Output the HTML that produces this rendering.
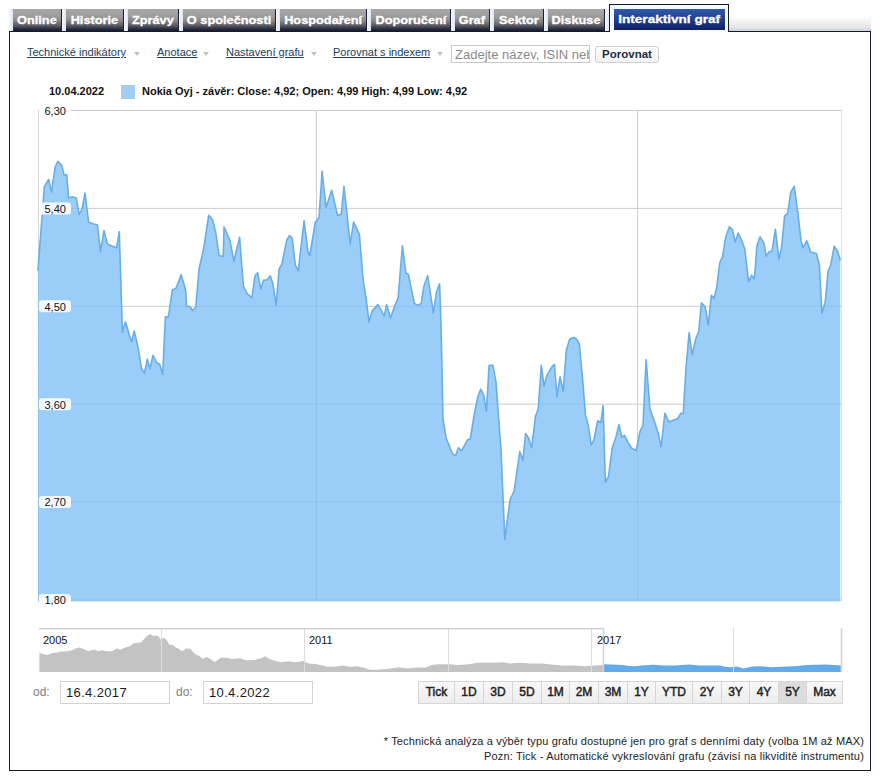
<!DOCTYPE html>
<html><head><meta charset="utf-8">
<style>
*{box-sizing:border-box}
html,body{margin:0;padding:0;background:#fff;width:880px;height:781px;overflow:hidden;font-family:"Liberation Sans",sans-serif}
.abs{position:absolute}
.tab{position:absolute;top:9px;height:23px;}
.tab .sh{position:absolute;left:0;top:0;width:4px;height:22px;background:linear-gradient(to right,#f4f7fb,#dfe6f0)}
.tab .bd{position:absolute;left:4px;top:0;right:0;height:22px;background:linear-gradient(to bottom,#a8a8a8 0%,#9c9c9c 35%,#868688 55%,#5a5a60 75%,#2c2f42 90%,#131a36 100%);border-right:1px solid #1c2030;color:#fff;font-weight:bold;font-size:11.5px;line-height:22px;text-align:center;white-space:nowrap}
.tab .bd span{display:inline-block;transform:scaleX(1.11);-webkit-text-stroke:0.3px #fff}
#box{position:absolute;left:9px;top:31px;width:862px;height:740px;border:1px solid #151c2c}
.lnk{position:absolute;top:46px;font-size:11px;color:#203c5c;text-decoration:underline;white-space:nowrap;line-height:13px}
.rb{position:absolute;top:681px;height:23px;border:1px solid #d6d6d6;border-right:none;font-size:12px;color:#222;line-height:21px;text-align:center;white-space:nowrap;background:linear-gradient(#f7f7f7,#eeeeee);-webkit-text-stroke:0.45px #222}
.rb.sel{background:#dcdcdc}
.tri{position:absolute;top:52px;width:0;height:0;border-left:3px solid transparent;border-right:3px solid transparent;border-top:4px solid #c2c2c2}
</style></head><body>
<!-- tabs -->
<div class="tab" style="left:9px;width:53px"><div class="sh"></div><div class="bd"><span>Online</span></div></div>
<div class="tab" style="left:62px;width:62px"><div class="sh"></div><div class="bd"><span>Historie</span></div></div>
<div class="tab" style="left:124px;width:55px"><div class="sh"></div><div class="bd"><span>Zprávy</span></div></div>
<div class="tab" style="left:179px;width:97px"><div class="sh"></div><div class="bd"><span>O společnosti</span></div></div>
<div class="tab" style="left:276px;width:91px"><div class="sh"></div><div class="bd"><span>Hospodaření</span></div></div>
<div class="tab" style="left:367px;width:84px"><div class="sh"></div><div class="bd"><span>Doporučení</span></div></div>
<div class="tab" style="left:451px;width:39px"><div class="sh"></div><div class="bd"><span>Graf</span></div></div>
<div class="tab" style="left:490px;width:54px"><div class="sh"></div><div class="bd"><span>Sektor</span></div></div>
<div class="tab" style="left:544px;width:61px"><div class="sh"></div><div class="bd"><span>Diskuse</span></div></div>
<div class="tab" style="left:605px;width:4px"><div class="sh"></div></div>

<div id="box"></div>
<!-- right gradient strip -->
<div class="abs" style="left:729px;top:17px;width:142px;height:14px;background:linear-gradient(to bottom,#fdfdfd,#e6e4e4 75%,#c9d2e2)"></div>
<!-- active tab -->
<div class="abs" style="left:609px;top:4px;width:120px;height:28px;border:1px solid #151c2c;border-bottom:none;background:linear-gradient(#f3f7fc,#fafcfe)"></div>
<div class="abs" style="left:614px;top:9px;width:111px;height:21px;background:linear-gradient(to bottom,#2f5aa8,#1d3c8a 55%,#0f1f66);color:#fff;font-weight:bold;font-size:11.5px;line-height:21px;text-align:center;white-space:nowrap"><span style="display:inline-block;transform:scaleX(1.18);-webkit-text-stroke:0.3px #fff">Interaktivní graf</span></div>

<!-- toolbar -->
<span class="lnk" style="left:27px">Technické indikátory</span><span class="tri" style="left:134px"></span>
<span class="lnk" style="left:157px">Anotace</span><span class="tri" style="left:203px"></span>
<span class="lnk" style="left:226px">Nastavení grafu</span><span class="tri" style="left:311px"></span>
<span class="lnk" style="left:333px">Porovnat s indexem</span><span class="tri" style="left:437px"></span>
<div class="abs" style="left:451px;top:45px;width:139px;height:18px;border:1px solid #c8c8c8;font-size:13px;color:#8a8a8a;line-height:18px;padding-left:3px;white-space:nowrap;overflow:hidden">Zadejte název, ISIN nebo</div>
<div class="abs" style="left:595px;top:46px;width:64px;height:17px;border:1px solid #cfcfcf;border-radius:3px;background:linear-gradient(#fff,#f2f2f2);font-size:11.5px;font-weight:bold;color:#1b2c48;line-height:15px;text-align:center">Porovnat</div>

<!-- legend -->
<div class="abs" style="left:49px;top:84px;font-size:11px;font-weight:bold;color:#111;line-height:14px">10.04.2022</div>
<div class="abs" style="left:121px;top:85px;width:14px;height:14px;background:#9fcff5"></div>
<div class="abs" style="left:142px;top:84px;font-size:11px;font-weight:bold;color:#111;line-height:14px;white-space:nowrap">Nokia Oyj - závěr: Close: 4,92; Open: 4,99 High: 4,99 Low: 4,92</div>

<!-- chart svg -->
<svg class="abs" style="left:0;top:0" width="880" height="781" id="chart">
<g stroke="#cdcdcd" stroke-width="1" fill="none">
<path d="M316.5,110.5 V600.5 M637.5,110.5 V600.5"/>
<path d="M38.5,110 V601" stroke="#d6d6d6"/><path d="M841.5,110 V601" stroke="#e2e2e2"/>
<path d="M38,110.5 H842 M38,208.4 H842 M38,306.3 H842 M38,404.2 H842 M38,502.1 H842 M38,600.0 H842"/>
</g>
<path d="M37.9,270.8 L44.4,186.4 L48.7,179.5 L51.4,192.0 L55.2,167.0 L57.9,161.4 L61.7,165.3 L64.0,174.9 L66.7,174.9 L68.6,197.9 L72.5,196.7 L76.3,198.0 L79.0,214.4 L82.0,209.4 L85.0,193.0 L88.6,222.0 L93.6,224.0 L97.4,224.8 L100.5,251.6 L104.0,230.5 L107.4,244.0 L112.0,245.9 L116.6,247.8 L119.3,231.7 L122.4,332.2 L125.4,321.9 L131.5,342.0 L134.2,331.0 L137.7,345.7 L141.6,368.7 L144.3,373.3 L147.3,359.1 L150.0,368.7 L153.0,355.3 L156.9,363.0 L159.6,364.0 L162.7,374.5 L165.4,316.9 L168.4,316.9 L172.3,290.0 L176.1,288.1 L181.1,274.7 L185.7,290.0 L186.5,306.0 L190.2,307.0 L192.6,310.5 L195.8,307.0 L199.1,268.9 L203.8,247.8 L208.7,215.2 L212.6,219.8 L215.7,232.4 L219.1,255.5 L223.3,256.6 L224.0,226.7 L229.9,240.1 L233.8,261.2 L239.6,237.4 L243.4,286.2 L247.3,293.9 L251.9,297.7 L255.0,275.8 L257.6,272.7 L260.7,288.9 L263.4,280.4 L267.2,279.7 L270.3,275.8 L273.0,284.3 L276.1,305.4 L279.1,268.9 L281.8,264.3 L286.8,240.1 L289.5,235.5 L292.2,238.2 L295.3,265.0 L298.3,270.8 L304.1,220.9 L307.9,251.6 L309.8,255.5 L315.2,222.8 L319.1,217.1 L322.1,171.0 L326.0,207.5 L331.7,190.2 L337.5,215.2 L341.3,214.4 L344.0,186.4 L347.1,215.2 L350.2,244.0 L353.6,222.1 L359.4,234.4 L363.2,280.4 L366.3,299.6 L369.0,321.9 L372.0,311.1 L377.8,304.6 L381.6,311.1 L384.3,316.1 L386.6,304.6 L390.5,318.0 L394.3,307.3 L398.1,297.7 L402.4,245.9 L405.8,272.7 L408.5,274.7 L414.3,303.5 L418.1,305.4 L421.2,303.5 L423.9,286.2 L427.7,275.7 L430.8,296.0 L433.4,313.3 L436.5,292.2 L439.6,283.8 L441.1,326.8 L443.0,418.9 L446.1,438.1 L450.0,447.7 L452.6,454.2 L455.7,455.4 L458.4,447.7 L461.5,450.8 L465.3,443.9 L467.2,440.0 L470.3,438.9 L474.1,415.1 L477.6,397.8 L480.7,389.0 L483.7,395.1 L486.4,411.2 L489.1,365.2 L492.9,365.2 L496.0,382.4 L501.0,449.6 L504.8,539.8 L507.5,518.7 L510.2,499.5 L514.1,491.1 L519.8,451.5 L522.9,460.4 L525.6,433.5 L528.6,438.1 L531.7,447.7 L535.6,415.8 L538.2,409.3 L541.3,365.2 L544.0,386.3 L547.1,374.8 L551.7,367.1 L554.4,364.4 L557.0,396.6 L560.1,376.7 L563.2,391.3 L566.3,350.6 L569.7,339.1 L573.9,337.5 L576.6,339.1 L579.3,344.0 L582.4,376.7 L585.5,415.1 L588.1,424.7 L591.2,445.0 L593.9,440.0 L597.7,420.8 L600.8,422.7 L603.1,405.5 L605.4,482.2 L608.5,476.5 L612.3,447.7 L616.2,436.2 L618.9,424.7 L621.9,437.2 L624.6,435.3 L627.7,441.8 L631.5,448.0 L636.1,450.6 L640.0,431.4 L643.0,425.7 L646.1,359.7 L649.9,408.4 L654.5,421.8 L658.4,434.1 L661.1,446.8 L664.9,413.4 L668.8,421.8 L673.7,419.9 L677.6,418.8 L680.7,413.4 L683.3,413.4 L686.0,368.1 L689.1,332.8 L692.2,354.7 L695.6,339.3 L698.7,331.6 L701.4,302.8 L705.2,306.7 L708.3,325.1 L711.4,295.2 L714.0,298.2 L716.7,287.5 L719.8,262.5 L722.5,256.8 L725.6,237.6 L729.4,226.8 L732.5,229.9 L735.2,242.2 L738.2,233.0 L742.1,241.4 L744.8,249.1 L748.6,281.7 L751.7,275.2 L754.4,279.0 L757.0,245.3 L760.1,236.8 L764.0,243.3 L766.1,256.1 L769.2,251.6 L771.9,251.6 L775.4,229.4 L778.9,259.1 L781.5,247.9 L784.6,216.1 L787.7,213.0 L790.7,192.1 L794.2,186.4 L797.9,213.0 L801.0,240.7 L803.0,247.9 L806.7,240.7 L810.8,252.0 L814.3,253.0 L816.4,253.6 L819.4,265.3 L821.9,313.4 L825.2,302.2 L828.0,271.4 L830.7,265.3 L834.2,246.2 L837.5,251.0 L840.3,260.2 L840.3,601.5 L37.9,601.5 Z" fill="#78bef6" fill-opacity="0.75" stroke="none"/>
<path d="M37.9,270.8 L44.4,186.4 L48.7,179.5 L51.4,192.0 L55.2,167.0 L57.9,161.4 L61.7,165.3 L64.0,174.9 L66.7,174.9 L68.6,197.9 L72.5,196.7 L76.3,198.0 L79.0,214.4 L82.0,209.4 L85.0,193.0 L88.6,222.0 L93.6,224.0 L97.4,224.8 L100.5,251.6 L104.0,230.5 L107.4,244.0 L112.0,245.9 L116.6,247.8 L119.3,231.7 L122.4,332.2 L125.4,321.9 L131.5,342.0 L134.2,331.0 L137.7,345.7 L141.6,368.7 L144.3,373.3 L147.3,359.1 L150.0,368.7 L153.0,355.3 L156.9,363.0 L159.6,364.0 L162.7,374.5 L165.4,316.9 L168.4,316.9 L172.3,290.0 L176.1,288.1 L181.1,274.7 L185.7,290.0 L186.5,306.0 L190.2,307.0 L192.6,310.5 L195.8,307.0 L199.1,268.9 L203.8,247.8 L208.7,215.2 L212.6,219.8 L215.7,232.4 L219.1,255.5 L223.3,256.6 L224.0,226.7 L229.9,240.1 L233.8,261.2 L239.6,237.4 L243.4,286.2 L247.3,293.9 L251.9,297.7 L255.0,275.8 L257.6,272.7 L260.7,288.9 L263.4,280.4 L267.2,279.7 L270.3,275.8 L273.0,284.3 L276.1,305.4 L279.1,268.9 L281.8,264.3 L286.8,240.1 L289.5,235.5 L292.2,238.2 L295.3,265.0 L298.3,270.8 L304.1,220.9 L307.9,251.6 L309.8,255.5 L315.2,222.8 L319.1,217.1 L322.1,171.0 L326.0,207.5 L331.7,190.2 L337.5,215.2 L341.3,214.4 L344.0,186.4 L347.1,215.2 L350.2,244.0 L353.6,222.1 L359.4,234.4 L363.2,280.4 L366.3,299.6 L369.0,321.9 L372.0,311.1 L377.8,304.6 L381.6,311.1 L384.3,316.1 L386.6,304.6 L390.5,318.0 L394.3,307.3 L398.1,297.7 L402.4,245.9 L405.8,272.7 L408.5,274.7 L414.3,303.5 L418.1,305.4 L421.2,303.5 L423.9,286.2 L427.7,275.7 L430.8,296.0 L433.4,313.3 L436.5,292.2 L439.6,283.8 L441.1,326.8 L443.0,418.9 L446.1,438.1 L450.0,447.7 L452.6,454.2 L455.7,455.4 L458.4,447.7 L461.5,450.8 L465.3,443.9 L467.2,440.0 L470.3,438.9 L474.1,415.1 L477.6,397.8 L480.7,389.0 L483.7,395.1 L486.4,411.2 L489.1,365.2 L492.9,365.2 L496.0,382.4 L501.0,449.6 L504.8,539.8 L507.5,518.7 L510.2,499.5 L514.1,491.1 L519.8,451.5 L522.9,460.4 L525.6,433.5 L528.6,438.1 L531.7,447.7 L535.6,415.8 L538.2,409.3 L541.3,365.2 L544.0,386.3 L547.1,374.8 L551.7,367.1 L554.4,364.4 L557.0,396.6 L560.1,376.7 L563.2,391.3 L566.3,350.6 L569.7,339.1 L573.9,337.5 L576.6,339.1 L579.3,344.0 L582.4,376.7 L585.5,415.1 L588.1,424.7 L591.2,445.0 L593.9,440.0 L597.7,420.8 L600.8,422.7 L603.1,405.5 L605.4,482.2 L608.5,476.5 L612.3,447.7 L616.2,436.2 L618.9,424.7 L621.9,437.2 L624.6,435.3 L627.7,441.8 L631.5,448.0 L636.1,450.6 L640.0,431.4 L643.0,425.7 L646.1,359.7 L649.9,408.4 L654.5,421.8 L658.4,434.1 L661.1,446.8 L664.9,413.4 L668.8,421.8 L673.7,419.9 L677.6,418.8 L680.7,413.4 L683.3,413.4 L686.0,368.1 L689.1,332.8 L692.2,354.7 L695.6,339.3 L698.7,331.6 L701.4,302.8 L705.2,306.7 L708.3,325.1 L711.4,295.2 L714.0,298.2 L716.7,287.5 L719.8,262.5 L722.5,256.8 L725.6,237.6 L729.4,226.8 L732.5,229.9 L735.2,242.2 L738.2,233.0 L742.1,241.4 L744.8,249.1 L748.6,281.7 L751.7,275.2 L754.4,279.0 L757.0,245.3 L760.1,236.8 L764.0,243.3 L766.1,256.1 L769.2,251.6 L771.9,251.6 L775.4,229.4 L778.9,259.1 L781.5,247.9 L784.6,216.1 L787.7,213.0 L790.7,192.1 L794.2,186.4 L797.9,213.0 L801.0,240.7 L803.0,247.9 L806.7,240.7 L810.8,252.0 L814.3,253.0 L816.4,253.6 L819.4,265.3 L821.9,313.4 L825.2,302.2 L828.0,271.4 L830.7,265.3 L834.2,246.2 L837.5,251.0 L840.3,260.2" fill="none" stroke="#68aee6" stroke-width="1.6" stroke-linejoin="round"/>
<g font-family="Liberation Sans" font-size="11" fill="#111">
<rect x="39" y="104.5" width="32" height="12" rx="3" fill="#fff" fill-opacity="0.9"/><text x="44.5" y="114.8">6,30</text>
<rect x="39" y="202.4" width="32" height="12" rx="3" fill="#fff" fill-opacity="0.9"/><text x="44.5" y="212.7">5,40</text>
<rect x="39" y="300.3" width="32" height="12" rx="3" fill="#fff" fill-opacity="0.9"/><text x="44.5" y="310.6">4,50</text>
<rect x="39" y="398.2" width="32" height="12" rx="3" fill="#fff" fill-opacity="0.9"/><text x="44.5" y="408.5">3,60</text>
<rect x="39" y="496.1" width="32" height="12" rx="3" fill="#fff" fill-opacity="0.9"/><text x="44.5" y="506.4">2,70</text>
<rect x="39" y="594.0" width="32" height="12" rx="3" fill="#fff" fill-opacity="0.9"/><text x="44.5" y="604.3">1,80</text>
</g>
<path d="M39.4,652.4 L42.8,653.9 L47.4,655.0 L51.9,653.2 L56.5,652.4 L61.0,651.6 L67.8,651.3 L72.4,650.2 L75.2,648.5 L79.2,647.5 L83.7,649.0 L88.3,651.3 L94.0,649.6 L98.5,651.3 L101.9,650.2 L106.5,651.3 L112.1,651.3 L116.7,648.5 L120.1,649.8 L125.8,647.3 L130.0,646.2 L133.4,643.3 L141.4,642.2 L143.6,639.4 L147.0,636.0 L150.5,633.7 L152.7,636.0 L156.1,635.4 L158.4,636.0 L160.7,639.4 L163.0,637.7 L166.4,639.4 L169.2,644.5 L172.6,645.0 L175.5,647.3 L178.9,649.0 L182.3,651.3 L185.7,648.5 L190.2,648.8 L193.6,652.4 L197.0,655.3 L199.3,655.8 L202.7,658.7 L206.7,657.0 L210.7,659.3 L214.7,662.1 L220.9,657.8 L226.6,657.8 L232.0,659.1 L240.5,658.2 L245.7,660.3 L254.2,659.9 L261.0,658.2 L265.3,656.2 L269.5,659.1 L274.6,660.8 L281.4,662.2 L288.3,661.3 L295.1,662.2 L303.6,661.1 L308.7,663.4 L315.5,663.9 L322.4,665.6 L327.5,666.8 L336.0,666.4 L342.8,665.4 L349.6,666.8 L356.5,666.2 L363.3,667.6 L370.1,669.7 L376.9,669.7 L387.1,669.0 L399.1,667.3 L407.6,668.5 L417.8,667.6 L426.3,667.6 L431.4,665.1 L438.3,664.2 L448.5,664.2 L458.7,665.1 L469.0,664.2 L477.5,662.8 L486.0,662.8 L494.5,662.8 L503.0,662.2 L509.9,663.4 L520.1,662.8 L530.3,663.4 L542.2,663.4 L550.8,664.5 L562.7,665.4 L574.6,665.6 L584.9,666.2 L595.1,665.4 L603.6,665.1 L603.6,672 L39.4,672 Z" fill="#c3c3c3"/>
<path d="M603.6,664.2 L612.1,664.5 L622.4,665.1 L629.2,665.9 L636.0,666.2 L641.1,665.6 L653.0,664.7 L663.3,665.4 L675.2,665.4 L688.8,664.5 L699.1,665.6 L709.3,665.4 L720.4,665.4 L724.6,666.8 L730.6,667.3 L736.8,666.4 L743.6,668.5 L752.2,666.4 L760.7,666.2 L770.9,667.3 L781.1,666.8 L794.8,666.2 L806.7,665.1 L825.4,664.5 L840.8,665.4 L840.8,672 L603.6,672 Z" fill="#62aaea"/>
<path d="M161.5,628 V672 M304.5,628 V672 M448.5,628 V672 M591.5,628 V672 M733.5,628 V672" stroke="#dcdcdc" stroke-width="1"/>
<path d="M39,628.7 H603.5 M603.5,628 V672 M841.5,628 V672" stroke="#d2d2d2" stroke-width="1.5" fill="none"/>
<g font-family="Liberation Sans" font-size="11" fill="#111">
<text x="43" y="644">2005</text><text x="309" y="644">2011</text><text x="597" y="644">2017</text>
</g>
</svg>

<!-- bottom inputs -->
<div class="abs" style="left:33px;top:685px;font-size:12px;color:#808080;line-height:15px">od:</div>
<div class="abs" style="left:60px;top:681px;width:110px;height:23px;border:1px solid #d2d2d2;font-size:13px;color:#1a1a1a;line-height:21px;padding-left:5px;letter-spacing:0.35px">16.4.2017</div>
<div class="abs" style="left:176px;top:685px;font-size:12px;color:#808080;line-height:15px">do:</div>
<div class="abs" style="left:203px;top:681px;width:110px;height:23px;border:1px solid #d2d2d2;font-size:13px;color:#1a1a1a;line-height:21px;padding-left:5px;letter-spacing:0.35px">10.4.2022</div>

<!-- range buttons -->
<div class="rb" style="left:418px;width:36px">Tick</div><div class="rb" style="left:454px;width:29px">1D</div><div class="rb" style="left:483px;width:29px">3D</div><div class="rb" style="left:512px;width:29px">5D</div><div class="rb" style="left:541px;width:28px">1M</div><div class="rb" style="left:569px;width:29px">2M</div><div class="rb" style="left:598px;width:29px">3M</div><div class="rb" style="left:627px;width:28px">1Y</div><div class="rb" style="left:655px;width:37px">YTD</div><div class="rb" style="left:692px;width:29px">2Y</div><div class="rb" style="left:721px;width:28px">3Y</div><div class="rb" style="left:749px;width:29px">4Y</div><div class="rb sel" style="left:778px;width:28px">5Y</div><div class="rb" style="left:806px;width:37px;border-right:1px solid #d6d6d6">Max</div>

<!-- footer -->
<div class="abs" style="right:16px;top:734px;font-size:11px;color:#222;line-height:15px;white-space:nowrap;letter-spacing:0.15px">* Technická analýza a výběr typu grafu dostupné jen pro graf s denními daty (volba 1M až MAX)</div>
<div class="abs" style="right:16px;top:749px;font-size:11px;color:#222;line-height:15px;white-space:nowrap;letter-spacing:0.18px">Pozn: Tick - Automatické vykreslování grafu (závisí na likviditě instrumentu)</div>
</body></html>
